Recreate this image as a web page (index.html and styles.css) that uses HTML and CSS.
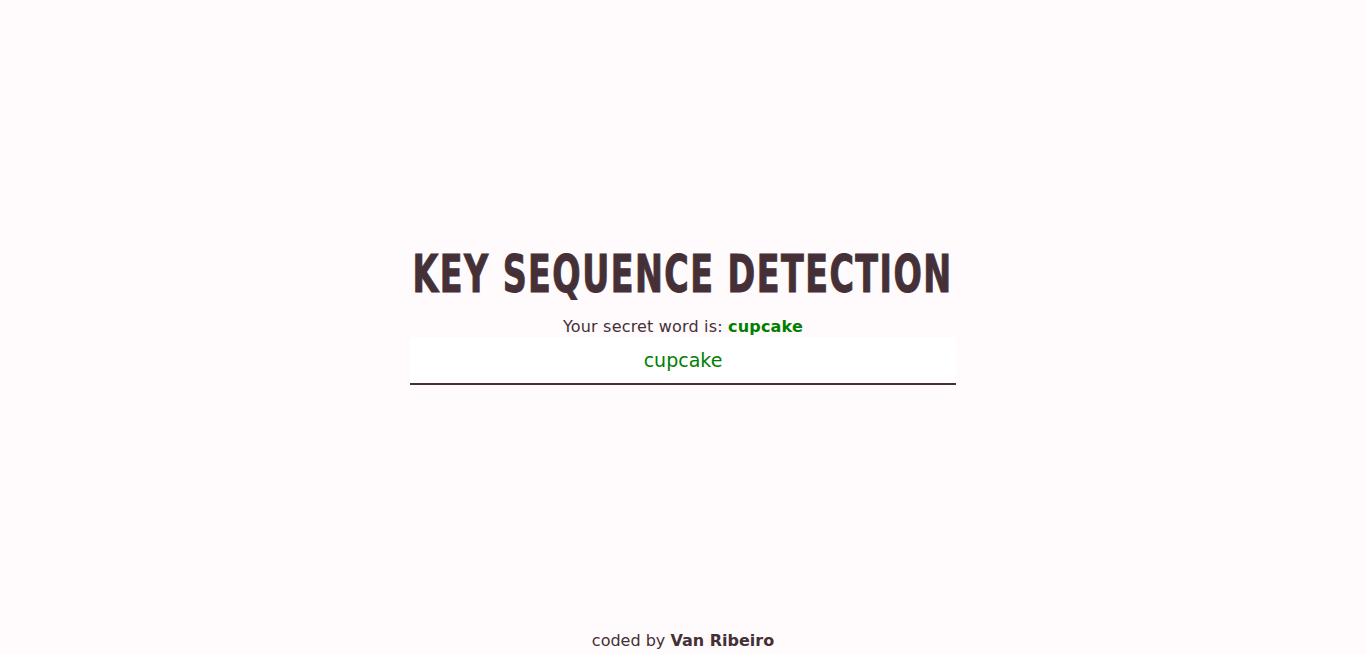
FILE: index.html
```html
<!DOCTYPE html>
<html lang="en">
<head>
<meta charset="utf-8">
<title>Key Sequence Detection</title>
<link rel="stylesheet" href="styles.css">
</head>
<body>
<main class="main">
  <h1 class="title"><span class="title-text">KEY SEQUENCE DETECTION</span></h1>
  <p class="secret">Your secret word is: <strong class="word">cupcake</strong></p>
  <div class="field">cupcake</div>
</main>
<footer class="footer">coded by <strong>Van Ribeiro</strong></footer>
</body>
</html>
```
FILE: styles.css
```css
html, body {
  margin: 0;
  padding: 0;
}
body {
  background: #fffafb;
  color: #443036;
  font-family: "DejaVu Sans", Verdana, sans-serif;
  min-height: 100vh;
  display: flex;
  flex-direction: column;
}
.main {
  flex: 1;
  display: flex;
  flex-direction: column;
  align-items: center;
  justify-content: center;
  padding-bottom: 2px;
}
.title {
  margin: 0;
  line-height: 60px;
  white-space: nowrap;
}
.title-text {
  display: inline-block;
  font-family: "DejaVu Sans Condensed", "DejaVu Sans", sans-serif;
  font-stretch: condensed;
  font-weight: 900;
  font-size: 51px;
  letter-spacing: 2px;
  transform: scaleX(0.727);
  -webkit-text-stroke: 1px #443036;
}
.secret {
  font-size: 16px;
  letter-spacing: 0.18px;
  margin: 6px 0 0;
  line-height: 20px;
}
.word {
  color: #008000;
}
.field {
  width: 546px;
  box-sizing: border-box;
  background: #fff;
  border-bottom: 2px solid #443036;
  text-align: center;
  color: #008000;
  font-size: 19px;
  height: 48px;
  line-height: 46px;
}
.footer {
  text-align: center;
  font-size: 16px;
  padding: 0 0 3px;
  line-height: 20px;
}
```
